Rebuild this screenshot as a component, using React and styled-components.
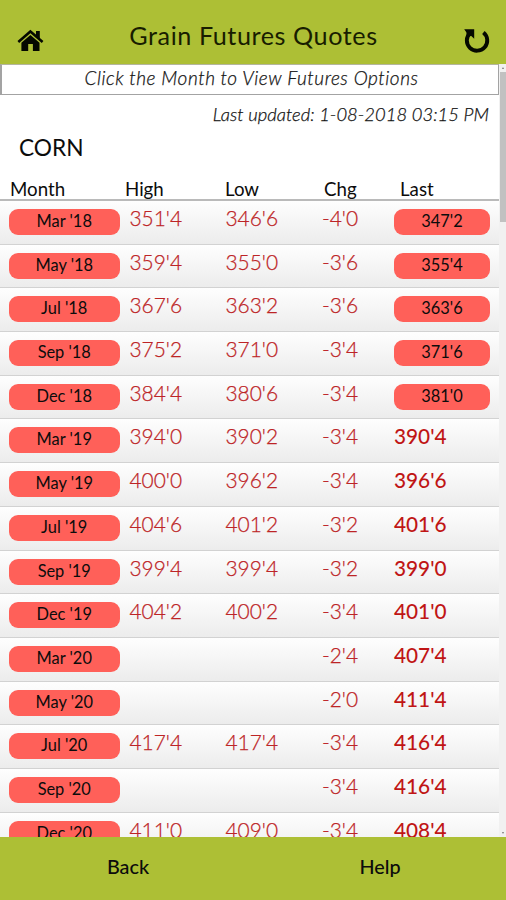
import React from "react";
import styled, { createGlobalStyle } from "styled-components";

const quotes = [
  ["Mar '18", "351'4", "346'6", "-4'0", "347'2", true],
  ["May '18", "359'4", "355'0", "-3'6", "355'4", true],
  ["Jul '18", "367'6", "363'2", "-3'6", "363'6", true],
  ["Sep '18", "375'2", "371'0", "-3'4", "371'6", true],
  ["Dec '18", "384'4", "380'6", "-3'4", "381'0", true],
  ["Mar '19", "394'0", "390'2", "-3'4", "390'4"],
  ["May '19", "400'0", "396'2", "-3'4", "396'6"],
  ["Jul '19", "404'6", "401'2", "-3'2", "401'6"],
  ["Sep '19", "399'4", "399'4", "-3'2", "399'0"],
  ["Dec '19", "404'2", "400'2", "-3'4", "401'0"],
  ["Mar '20", "", "", "-2'4", "407'4"],
  ["May '20", "", "", "-2'0", "411'4"],
  ["Jul '20", "417'4", "417'4", "-3'4", "416'4"],
  ["Sep '20", "", "", "-3'4", "416'4"],
  ["Dec '20", "411'0", "409'0", "-3'4", "408'4"],
];

const GlobalStyle = createGlobalStyle`
  * { box-sizing: border-box; }
  body { margin: 0; font-family: Lato, "Liberation Sans", sans-serif; font-variant-ligatures: none; color: #0c0c0c; background: #fff; }
  button { font: inherit; color: inherit; border: 0; padding: 0; background: none; cursor: pointer; }
`;

const Screen = styled.div`
  display: flex;
  flex-direction: column;
  width: 506px;
  height: 900px;
  overflow: hidden;
`;

const Header = styled.header`
  flex: 0 0 64px;
  display: grid;
  grid-template-columns: 60px 1fr 60px;
  background: #adbf35;
`;

const Title = styled.h1`
  margin: 0;
  padding: 20px 0 0 1px;
  font-size: 25.2px;
  line-height: 30px;
  font-weight: 400;
  letter-spacing: 0.56px;
  text-align: center;
  white-space: nowrap;
  color: #181d00;
`;

const IconButton = styled.button`
  display: flex;
  justify-content: ${(p) => (p.$end ? "flex-end" : "flex-start")};
  align-items: flex-start;
  padding: ${(p) => (p.$end ? "28px 16px 0 0" : "29px 0 0 17px")};
  svg { display: block; color: #050900; }
`;

const Body = styled.div`
  flex: 1;
  min-height: 0;
  display: flex;
`;

const Content = styled.main`
  width: 499px;
  overflow: hidden;
`;

const Notice = styled.div`
  height: 31px;
  border: 1px solid #a3a3a3;
  border-left-width: 2px;
  border-top-color: #b4b69e;
  padding-left: 3px;
  font-size: 19px;
  line-height: 26px;
  font-style: italic;
  font-weight: 300;
  letter-spacing: 0.53px;
  -webkit-text-stroke: 0.25px #222;
  text-align: center;
  white-space: nowrap;
`;

const Updated = styled.div`
  height: 40px;
  padding-right: 10px;
  font-size: 18.4px;
  line-height: 39px;
  font-style: italic;
  font-weight: 300;
  letter-spacing: 0.02px;
  -webkit-text-stroke: 0.25px #222;
  text-align: right;
  white-space: nowrap;
`;

const Commodity = styled.h2`
  height: 35px;
  margin: 0 0 0 19px;
  font-size: 22.7px;
  line-height: 25px;
  font-weight: 400;
`;

const HeadRow = styled.div`
  display: grid;
  grid-template-columns: 125px 100px 99px 76px 1fr;
  height: 31px;
  border-bottom: 2px solid #bababa;
  font-size: 18.7px;
  line-height: 39px;
  & > :first-child { padding-left: 10px; }
`;

const Row = styled.div`
  display: grid;
  grid-template-columns: 129.5px 96px 96.5px 72px 1fr;
  height: 43.7px;
  border-bottom: 1px solid #d2d2d2;
  background: linear-gradient(#fefefe, #ececec);
`;

const Price = styled.span`
  padding-top: 4px;
  font-size: ${(p) => (p.$strong ? 20.8 : 20.9)}px;
  line-height: 26px;
  font-weight: ${(p) => (p.$strong ? 500 : 300)};
  color: ${(p) => (p.$strong ? "#c01515" : "#bd2426")};
  -webkit-text-stroke: ${(p) => (p.$strong ? 0 : 0.25)}px currentColor;
  white-space: nowrap;
`;

const Pill = styled.button`
  display: block;
  width: ${(p) => (p.$narrow ? 96 : 110.5)}px;
  height: 26px;
  margin: 8px 0 0 ${(p) => (p.$narrow ? 0 : 9)}px;
  border-radius: 9px;
  background: #ff6059;
  font-size: 16.4px;
  line-height: 24px;
  padding-bottom: 2px;
  text-align: center;
`;

const Scrollbar = styled.div`
  width: 7px;
  display: flex;
  flex-direction: column;
  align-items: center;
  background: #f1f1f1;
`;

const Arrow = styled.span`
  flex: 0 0 8px;
  display: flex;
  align-items: center;
  &::before {
    content: "";
    border: 1.5px solid transparent;
    border-top-width: ${(p) => (p.$down ? "2px" : "0")};
    border-bottom-width: ${(p) => (p.$down ? "0" : "2px")};
    border-top-color: #777;
    border-bottom-color: #777;
  }
`;

const Thumb = styled.div`
  width: 6px;
  height: 150px;
  margin-bottom: auto;
  background: #c1c1c1;
`;

const Footer = styled.footer`
  flex: 0 0 63px;
  display: grid;
  grid-template-columns: 1fr 1fr;
  padding: 0 0 5px 2px;
  background: #adbf35;
  font-size: 19.8px;
  font-weight: 500;
`;

function HomeIcon() {
  return (
    <svg width="27" height="23" viewBox="0 0 27 23" fill="none">
      <path d="M1.3 13L13.4 2.5L25.6 13" stroke="currentColor" strokeWidth="2.5" />
      <path d="M19 2H22.8V10L19 6.7Z" fill="currentColor" />
      <path d="M4.4 13.8L13.4 6L22.5 13.8V22H15.9V15H11.2V22H4.4Z" fill="currentColor" />
    </svg>
  );
}

function ReloadIcon() {
  return (
    <svg width="27" height="27" viewBox="0 0 27 27" fill="none">
      <path d="M20.4 4.5A10.2 10.2 0 1 1 7.1 5" stroke="currentColor" strokeWidth="3.9" />
      <path d="M1.2 1.2H11.2V10.7L8 7.7L4.1 9.8L3.3 4.2Z" fill="currentColor" />
    </svg>
  );
}

export default function App() {
  return (
    <Screen>
      <GlobalStyle />
      <Header>
        <IconButton aria-label="Home"><HomeIcon /></IconButton>
        <Title>Grain Futures Quotes</Title>
        <IconButton $end aria-label="Refresh"><ReloadIcon /></IconButton>
      </Header>
      <Body>
        <Content>
          <Notice>Click the Month to View Futures Options</Notice>
          <Updated>Last updated: 1-08-2018 03:15 PM</Updated>
          <Commodity>CORN</Commodity>
          <HeadRow>
            <span>Month</span><span>High</span><span>Low</span><span>Chg</span><span>Last</span>
          </HeadRow>
          {quotes.map(([month, high, low, change, last, active]) => (
            <Row key={month}>
              <Pill>{month}</Pill>
              <Price>{high}</Price>
              <Price>{low}</Price>
              <Price>{change}</Price>
              {active ? <Pill $narrow>{last}</Pill> : <Price $strong>{last}</Price>}
            </Row>
          ))}
        </Content>
        <Scrollbar><Arrow /><Thumb /><Arrow $down /></Scrollbar>
      </Body>
      <Footer><button>Back</button><button>Help</button></Footer>
    </Screen>
  );
}
